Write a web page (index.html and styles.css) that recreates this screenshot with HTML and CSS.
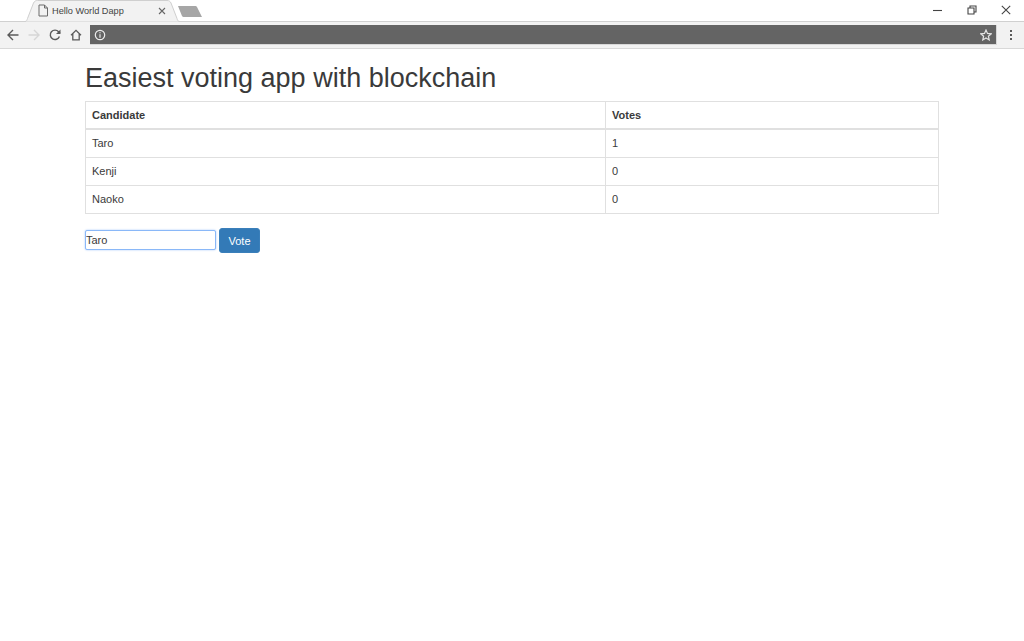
FILE: index.html
```html
<!DOCTYPE html>
<html lang="en">
<head>
<meta charset="utf-8">
<title>Hello World Dapp</title>
<link rel="stylesheet" href="styles.css">
</head>
<body>
<header class="browser">
  <div class="tabstrip">
    <div class="tab">
      <svg class="tab-shape" width="156" height="22" viewBox="0 0 156 22"><path d="M0 21.5H1C2.5 21.5 3 20 3.5 18.5L9.5 3C10.5 1.2 11.5 .5 13.5 .5H143C145 .5 146 1.2 147 3L153 18.5C153.6 20.5 154 21.5 156 21.5" fill="#f2f2f2" stroke="#cfcfcf"/></svg>
      <svg class="page-icon" width="12" height="13" viewBox="0 0 12 13"><path d="M2 1H7.5L10.5 4V12H2ZM7.5 1V4H10.5" fill="none" stroke="#6a6a6a"/></svg>
      <span class="tab-title">Hello World Dapp</span>
      <svg class="tab-close" width="8" height="8" viewBox="0 0 8 8"><path d="M1 1L7 7M7 1L1 7" stroke="#666" stroke-width="1.1"/></svg>
    </div>
    <svg class="new-tab" width="26" height="13" viewBox="0 0 26 13"><path d="M1 1H18C19 1 19.6 1.4 20 2L25 12H7C6 12 5.6 11.6 5 11Z" fill="#a6a6a6"/></svg>
    <div class="window-controls">
      <svg width="10" height="10" viewBox="0 0 10 10"><path d="M0 5.5H9" stroke="#444" stroke-width="1.1"/></svg>
      <svg width="10" height="10" viewBox="0 0 10 10"><path d="M1 3H7V9H1ZM3 3V1H9V7H7" fill="none" stroke="#444" stroke-width="1.1"/></svg>
      <svg width="10" height="10" viewBox="0 0 10 10"><path d="M.8 .8L9.2 9.2M9.2 .8L.8 9.2" stroke="#444" stroke-width="1.1"/></svg>
    </div>
  </div>
  <div class="toolbar">
    <div class="nav-buttons">
      <svg width="12" height="12" viewBox="0 0 12 12"><path d="M11.5 6H1M6 1L1 6L6 11" fill="none" stroke="#5a5a5a" stroke-width="1.4"/></svg>
      <svg width="12" height="12" viewBox="0 0 12 12"><path d="M.5 6H11M6 1L11 6L6 11" fill="none" stroke="#d6d6d6" stroke-width="1.4"/></svg>
      <svg width="12" height="12" viewBox="0 0 12 12"><path d="M10.4 7.5A4.7 4.7 0 1 1 9.6 2.8L11 4.2" fill="none" stroke="#5a5a5a" stroke-width="1.4"/><path d="M11.5 .5V5H7Z" fill="#5a5a5a"/></svg>
      <svg width="12" height="12" viewBox="0 0 12 12"><path d="M1 6.2L6 1.4L11 6.2M2.8 5V10.8H9.2V5" fill="none" stroke="#5a5a5a" stroke-width="1.3"/></svg>
    </div>
    <div class="omnibox">
      <svg width="12" height="12" viewBox="0 0 12 12"><circle cx="6" cy="6" r="4.7" fill="none" stroke="#ececec" stroke-width="1.2"/><path d="M6 3.2V4.2M6 5.2V8.8" stroke="#ececec" stroke-width="1.2"/></svg>
      <svg width="12" height="12" viewBox="0 0 12 12"><path d="M6 1L7.5 4.4L11.2 4.8L8.4 7.2L9.2 10.9L6 9L2.8 10.9L3.6 7.2L.8 4.8L4.5 4.4Z" fill="none" stroke="#e4e4e4" stroke-width="1.2"/></svg>
    </div>
    <div class="menu-dots"><i></i><i></i><i></i></div>
  </div>
</header>
<main class="content">
  <h1 class="title">Easiest voting app with blockchain</h1>
  <table class="votes">
    <thead>
      <tr><th class="col-name">Candidate</th><th>Votes</th></tr>
    </thead>
    <tbody>
      <tr class="first-row"><td>Taro</td><td>1</td></tr>
      <tr><td>Kenji</td><td>0</td></tr>
      <tr><td>Naoko</td><td>0</td></tr>
    </tbody>
  </table>
  <form class="vote-form">
    <input class="vote-input" type="text" value="Taro">
    <button class="vote-button" type="button">Vote</button>
  </form>
</main>
</body>
</html>
```
FILE: styles.css
```css
* { box-sizing: border-box; }
html, body { margin: 0; height: 100%; }
body {
  background: #fff;
  color: #3a3a3a;
  font-family: "Liberation Sans", Arial, sans-serif;
  font-size: 11px;
  overflow: hidden;
}
.browser { background: #f2f2f2; border-bottom: 1px solid #d8d8d8; height: 49px; }
.tabstrip {
  height: 22px;
  background: #fff;
  display: flex;
  align-items: flex-start;
  padding-left: 24px;
  border-bottom: 1px solid #d0d0d0;
}
.tab {
  position: relative;
  width: 156px;
  height: 22px;
  display: flex;
  align-items: center;
  padding: 0 0 1px 13px;
}
.tab-shape { position: absolute; left: 0; top: 0; }
.page-icon, .tab-title, .tab-close { position: relative; }
.tab-title { margin-left: 3px; font-size: 9.2px; color: #444; flex: 1; white-space: nowrap; }
.tab-close { margin-right: 14px; }
.new-tab { margin: 5px 0 0 -3px; }
.window-controls {
  margin-left: auto;
  margin-top: 5px;
  display: flex;
  gap: 24px;
  padding-right: 13px;
}
.toolbar { height: 26px; display: flex; align-items: center; padding: 0 11px 0 7px; }
.nav-buttons { display: flex; gap: 9px; width: 83px; flex: none; }
.omnibox {
  flex: 1;
  height: 20px;
  background: #646464;
  border: 1px solid #d8d8d8;
  border-width: 0 1px 1px 0;
  display: flex;
  align-items: center;
  justify-content: space-between;
  padding: 0 4px 0 4px;
}
.menu-dots { width: 4px; margin-left: 12px; display: flex; flex-direction: column; gap: 2px; align-items: center; }
.menu-dots i { display: block; width: 2px; height: 2px; background: #5a5a5a; }
.content { padding: 0 85px; }
.title { margin: 14px 0 7px; font-size: 27px; font-weight: 400; line-height: 31px; color: #3a3a3a; }
.votes { width: 100%; border-collapse: collapse; table-layout: fixed; border: 1px solid #e0e0e0; }
.votes th, .votes td {
  text-align: left;
  padding: 0 6px;
  border: 1px solid #e0e0e0;
  height: 28px;
  line-height: 16px;
}
.votes td { padding-bottom: 1px; }
.votes th { font-weight: 700; height: 27px; border-bottom-width: 2px; }
.votes .first-row td { height: 29px; }
.col-name { width: 520px; }
.vote-form { display: flex; align-items: center; margin-top: 14px; gap: 3px; }
.vote-input {
  width: 131px;
  height: 20px;
  margin-bottom: 1px;
  border: 1px solid #8ab8f8;
  border-radius: 2px;
  box-shadow: 0 0 2px #9dc3fa;
  padding: 0;
  font: 11px "Liberation Sans", Arial, sans-serif;
  color: #3a3a3a;
  outline: none;
}
.vote-button {
  width: 41px;
  height: 25px;
  background: #337ab7;
  border: 1px solid #3a7fba;
  border-radius: 3px;
  color: #fff;
  font: 11px "Liberation Sans", Arial, sans-serif;
  padding: 0;
}
```
